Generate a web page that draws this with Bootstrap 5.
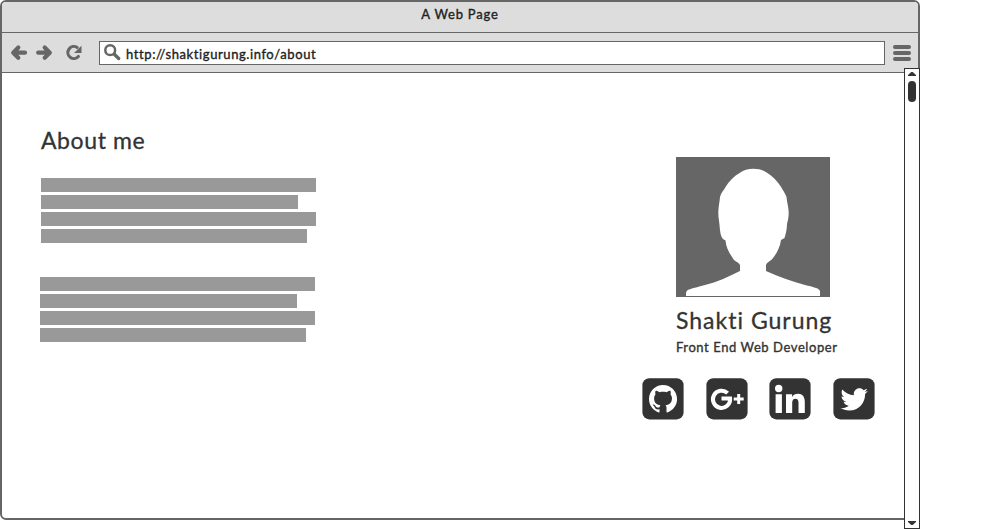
<!DOCTYPE html>
<html lang="en">
<head>
<meta charset="utf-8">
<meta name="viewport" content="width=device-width, initial-scale=1">
<title>A Web Page</title>
<link href="https://cdn.jsdelivr.net/npm/bootstrap@5.3.0/dist/css/bootstrap.min.css" rel="stylesheet">
<style>
body{font-family:Lato,"Open Sans",sans-serif;color:#333;overflow:hidden}
svg{display:block;flex:none}
.stage{width:920px;height:529px}
.browser{height:520px;border:2px solid #666;border-radius:6px}
.titlebar{height:31px;background:#ddd;border-bottom:1px solid #666;font-size:13px;line-height:25px;color:#222}
.titlebar span{letter-spacing:.8px;-webkit-text-stroke:.35px #222}
.toolbar{height:40px;background:#ddd;border-bottom:1px solid #666;padding:0 7px 0 8px}
.reload{margin-left:11px}
.address{height:24px;border:1px solid #666;margin-left:16px;margin-right:8px;padding-left:4px;font-size:13px;line-height:22px;color:#222}
.address span{margin-left:5px;padding-top:2px;letter-spacing:.59px;-webkit-text-stroke:.35px #222}
.about{padding:53px 0 0 39px;width:320px}
.heading{font-size:23px;line-height:28px;letter-spacing:.6px;font-weight:400;margin:0;-webkit-text-stroke:.3px #333}
.para{gap:3px;margin-top:24px}
.para + .para{margin:34px 0 0 -1px}
.para div{height:14px;background:#999;width:275px}
.para div:nth-child(2){width:257px}
.para div:nth-child(4){width:266px}
.profile{width:233px;margin-right:43px;padding-top:84px}
.who{margin-left:34px}
.fullname{margin-top:9px;letter-spacing:1px}
.role{font-size:13px;line-height:18px;margin-top:4px;white-space:nowrap;letter-spacing:.58px;-webkit-text-stroke:.35px #333}
.social{margin-top:22px}
.scroll{width:16px;height:461px;right:0;top:68px;border:1px solid #333;padding:3px 0}
.thumb{width:8px;height:21px;border-radius:4px;background:#333;margin-top:5px}
</style>
<script src="https://cdn.jsdelivr.net/npm/bootstrap@5.3.0/dist/js/bootstrap.bundle.min.js"></script>
</head>
<body class="bg-white">
<div class="stage position-relative">
  <div class="browser bg-white overflow-hidden">
    <div class="titlebar text-center"><span>A Web Page</span></div>
    <div class="toolbar d-flex align-items-center">
      <svg width="18" height="18" viewBox="0 0 18 18" fill="none" stroke="#666" stroke-width="4.200" stroke-linecap="round" stroke-linejoin="round"><path d="M15 8.700H4M8.300 3.600 3.200 8.700l5.100 5.100"/></svg>
      <svg class="ms-2" width="18" height="18" viewBox="0 0 18 18" fill="none" stroke="#666" stroke-width="4.200" stroke-linecap="round" stroke-linejoin="round"><path d="M2.200 8.700H13M8.700 3.600l5.100 5.100-5.100 5.100"/></svg>
      <svg class="reload" width="18" height="18" viewBox="0 0 18 18"><path d="M12.200 3.500A6 6 0 1 0 13.400 12.500" fill="none" stroke="#666" stroke-width="3.100" stroke-linecap="round"/><path d="M16.500 1.800v7.200H9z" fill="#666"/></svg>
      <div class="address bg-white flex-grow-1 d-flex align-items-center">
        <svg width="17" height="17" viewBox="0 0 17 17" fill="none" stroke="#666"><circle cx="6.200" cy="6.200" r="4.900" stroke-width="2.500"/><path d="m10.300 10.200 4.400 4.300" stroke-width="3.300" stroke-linecap="round"/></svg>
        <span>http://shaktigurung.info/about</span>
      </div>
      <svg width="18" height="18" viewBox="0 0 18 18" fill="#666"><rect y="1" width="18" height="4" rx="2"/><rect y="7" width="18" height="4" rx="2"/><rect y="13" width="18" height="4" rx="2"/></svg>
    </div>
    <main class="d-flex justify-content-between">
      <section class="about">
        <h1 class="heading">About me</h1>
        <div class="para d-flex flex-column"><div></div><div></div><div></div><div></div></div>
        <div class="para d-flex flex-column"><div></div><div></div><div></div><div></div></div>
      </section>
      <aside class="profile">
        <div class="who">
          <svg width="154" height="140" viewBox="0 0 154 140"><path fill="#666" d="M0 0h154v140H0z"/><path fill="#fff" d="M77.500 11.700C72 11.700 67.500 13 64 15.700C58 19 53 24.500 49.700 29.700C47.500 33.500 45 36 44 40C43.500 46 42.300 50 42.300 56C42.300 61 43.300 64 43.500 68C44 75 45 80 47 82L49.500 83.500C50 91 54 97 58 103C60 105 63 105.500 64 108V114C52 120 41 125 29 128C22 130 17 131 14 132.300C11.500 133 10.200 134 10 136V139H144V134C143 131 137 130 129 128C117 124.500 103 120 90 114V108C91 105 95 104 97 101C101 96 104 90 105 83L108.500 81C110 76 111 72 111 67C112 63 112.700 60 112.700 56C112.700 50 111 46 110.500 40C109 36 107 33.500 105 29.700C101 24 96.500 19 91 15.700C87 13 83 11.700 77.500 11.700Z"/></svg>
          <h2 class="heading fullname text-nowrap">Shakti Gurung</h2>
          <div class="role">Front End Web Developer</div>
        </div>
        <div class="social d-flex justify-content-between">
          <svg width="42" height="42" viewBox="0 0 42 42"><rect x=".4" y=".2" width="41.200" height="41.200" rx="7" fill="#333"/><path fill="#fff" transform="translate(7 6.700) scale(1.17)" d="M12 .297c-6.63 0-12 5.373-12 12 0 5.303 3.438 9.8 8.205 11.385.6.113.82-.258.82-.577 0-.285-.01-1.040-.015-2.040-3.338.724-4.042-1.610-4.042-1.610C4.422 18.070 3.633 17.700 3.633 17.700c-1.087-.744.084-.729.084-.729 1.205.084 1.838 1.236 1.838 1.236 1.070 1.835 2.809 1.305 3.495.998.108-.776.417-1.305.760-1.605-2.665-.3-5.466-1.332-5.466-5.930 0-1.310.465-2.380 1.235-3.220-.135-.303-.540-1.523.105-3.176 0 0 1.005-.322 3.300 1.230.960-.267 1.980-.399 3-.405 1.020.006 2.040.138 3 .405 2.280-1.552 3.285-1.230 3.285-1.230.645 1.653.240 2.873.120 3.176.765.840 1.230 1.910 1.230 3.220 0 4.610-2.805 5.625-5.475 5.920.420.360.810 1.096.810 2.220 0 1.606-.015 2.896-.015 3.286 0 .315.210.690.825.570C20.565 22.092 24 17.592 24 12.297c0-6.627-5.373-12-12-12"/></svg>
          <svg width="42" height="42" viewBox="0 0 42 42"><rect x=".4" y=".2" width="41.200" height="41.200" rx="7" fill="#333"/><path d="M21.600 15.200A8.600 8.600 0 1 0 24.100 20.600H15.500" fill="none" stroke="#fff" stroke-width="4"/><path d="M32.700 16v10M27.700 21h10" stroke="#fff" stroke-width="3"/></svg>
          <svg width="42" height="42" viewBox="0 0 42 42"><rect x=".4" y=".2" width="41.200" height="41.200" rx="7" fill="#333"/><g fill="#fff"><circle cx="9.700" cy="10.500" r="3.700"/><path d="M6.600 16.200h6.300V35H6.600zM17 16.200h6.100v2.700c1.300-2 3.200-3.200 6-3.200 4.300 0 6.700 2.800 6.700 8.300v11h-6.300V24.800c0-2.600-.900-4.100-3-4.100-2.200 0-3.300 1.600-3.300 4.100V35H17z"/></g></svg>
          <svg width="42" height="42" viewBox="0 0 42 42"><rect x=".4" y=".2" width="41.200" height="41.200" rx="7" fill="#333"/><path fill="#fff" transform="translate(7.500 7.800) scale(1.140)" d="M23.954 4.569c-.885.389-1.830.654-2.825.775 1.014-.611 1.794-1.574 2.163-2.723-.951.555-2.005.959-3.127 1.184-.896-.959-2.173-1.559-3.591-1.559-2.717 0-4.920 2.203-4.920 4.917 0 .390.045.765.127 1.124C7.691 8.094 4.066 6.130 1.640 3.161c-.427.722-.666 1.561-.666 2.475 0 1.710.870 3.213 2.188 4.096-.807-.026-1.566-.248-2.228-.616v.061c0 2.385 1.693 4.374 3.946 4.827-.413.111-.849.171-1.296.171-.314 0-.615-.030-.916-.086.631 1.953 2.445 3.377 4.604 3.417-1.680 1.319-3.809 2.105-6.102 2.105-.390 0-.779-.023-1.170-.067 2.189 1.394 4.768 2.209 7.557 2.209 9.054 0 13.999-7.496 13.999-13.986 0-.209 0-.420-.015-.630.961-.689 1.800-1.560 2.460-2.548z"/></svg>
        </div>
      </aside>
    </main>
  </div>
  <div class="scroll position-absolute bg-white d-flex flex-column align-items-center">
    <svg width="8" height="4" viewBox="0 0 8 4"><path d="M3.300 0h1.400L8 3v1H0V3z" fill="#333"/></svg>
    <div class="thumb"></div>
    <svg class="mt-auto" width="8" height="4" viewBox="0 0 8 4"><path d="M0 0h8v1L4.700 4H3.300L0 1z" fill="#333"/></svg>
  </div>
</div>
</body>
</html>
